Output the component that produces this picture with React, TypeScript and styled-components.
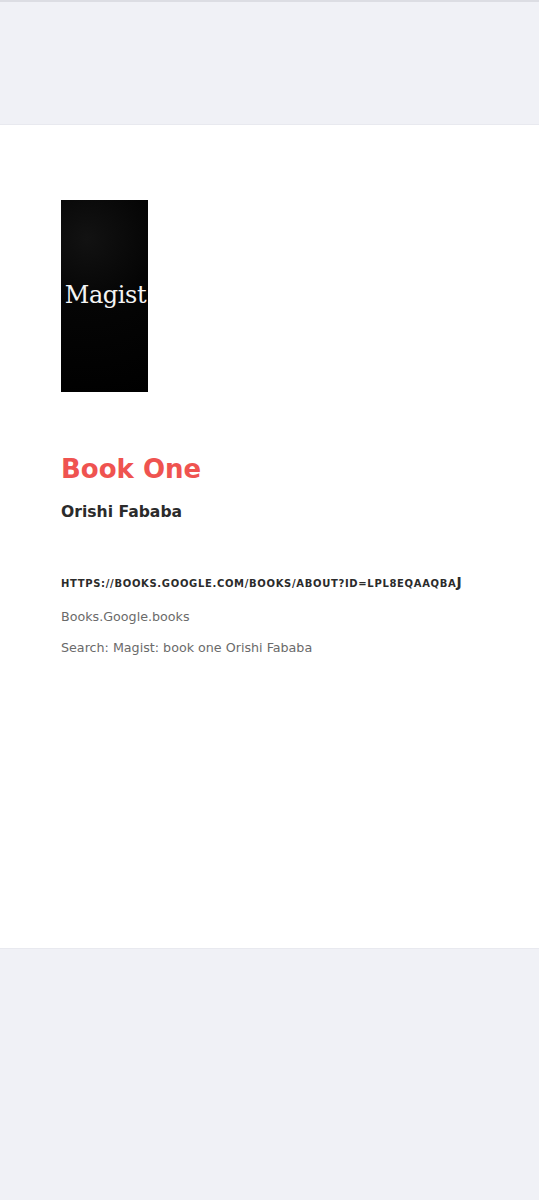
import React from "react";
import styled, { createGlobalStyle } from "styled-components";

const Global = createGlobalStyle`
  html, body { margin: 0; padding: 0; background: #f0f1f6; }
  body { font-family: "DejaVu Sans", Verdana, sans-serif; }
`;

const Page = styled.div`
  display: flex;
  flex-direction: column;
  min-height: 1200px;
  background: #f0f1f6;
`;

const TopBar = styled.div`
  height: 125px;
  background: #f0f1f6;
  border-top: 2px solid #dcdde3;
  box-sizing: border-box;
  border-bottom: 1px solid #e8e9ef;
`;

const Card = styled.main`
  background: #ffffff;
  height: 824px;
  box-sizing: border-box;
  padding: 75px 61px 0;
  display: flex;
  flex-direction: column;
  border-bottom: 1px solid #e8e9ef;
`;

const Cover = styled.div`
  width: 87px;
  height: 192px;
  background: radial-gradient(circle at 30% 20%, #121212 0%, #050505 40%, #000 100%);
  display: flex;
  align-items: center;
  justify-content: center;
  overflow: hidden;
`;

const CoverTitle = styled.span`
  font-family: "DejaVu Serif", "Liberation Serif", serif;
  color: #f4f4f4;
  font-size: 24px;
  letter-spacing: -0.4px;
  margin-left: 2px;
  margin-top: -2px;
`;

const Title = styled.h1`
  margin: 61px 0 0;
  color: #ef5350;
  font-size: 26px;
  font-weight: bold;
  line-height: 32px;
`;

const Author = styled.h2`
  margin: 17px 0 0;
  color: #2b2b2b;
  font-size: 15.6px;
  font-weight: bold;
  line-height: 20px;
`;

const Url = styled.div`
  margin: 52px 0 0;
  color: #2b2b2b;
  font-size: 10px;
  font-weight: bold;
  text-transform: uppercase;
  letter-spacing: 0.67px;
  line-height: 16px;
`;

const BigJ = styled.span`
  font-size: 14px;
`;

const Meta = styled.p<{ $top: number }>`
  margin: ${(p) => p.$top}px 0 0;
  color: #6a6a6a;
  font-size: 12.7px;
  line-height: 16px;
`;

export default function App() {
  return (
    <>
      <Global />
      <Page>
        <TopBar />
        <Card>
          <Cover>
            <CoverTitle>Magist</CoverTitle>
          </Cover>
          <Title>Book One</Title>
          <Author>Orishi Fababa</Author>
          <Url>
            https://books.google.com/books/about?id=lpL8EQAAQBA<BigJ>J</BigJ>
          </Url>
          <Meta $top={17}>Books.Google.books</Meta>
          <Meta $top={15}>Search: Magist: book one Orishi Fababa</Meta>
        </Card>
      </Page>
    </>
  );
}
